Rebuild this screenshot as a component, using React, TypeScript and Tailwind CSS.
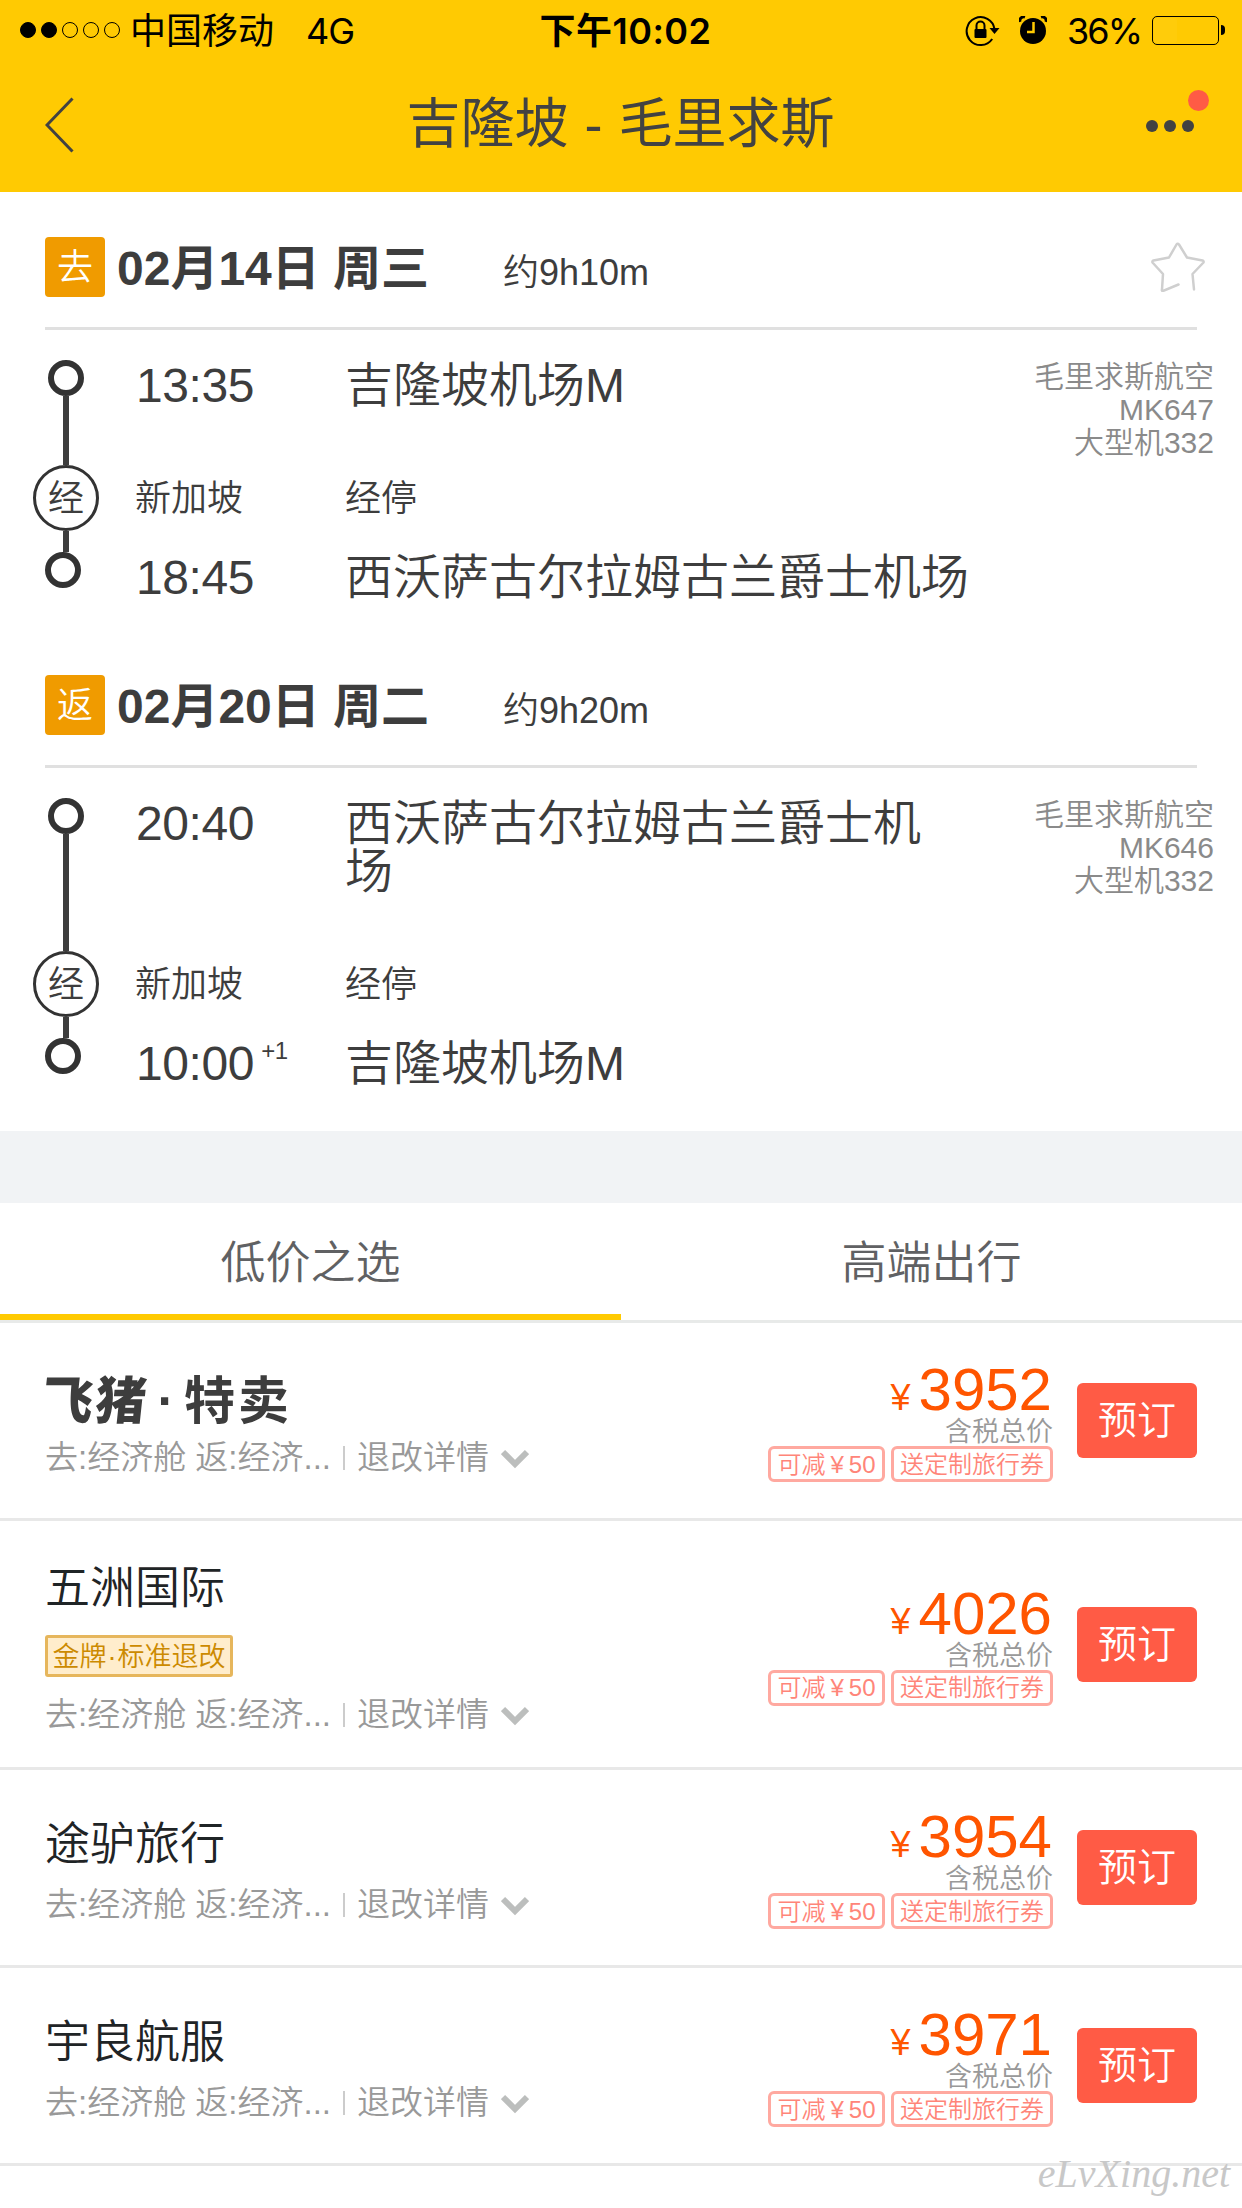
import clsx from 'clsx';

type Leg = {
  tag: string;
  date: string;
  duration: string;
  departTime: string;
  departAirport: string;
  stop: string;
  arriveTime: string;
  arriveAirport: string;
  dayOffset?: string;
  airline: string;
  flightNo: string;
  plane: string;
};

type Offer = {
  name: string;
  price: number;
  badge?: string;
  logo?: boolean;
};

const legs: Leg[] = [
  {
    tag: '去',
    date: '02月14日 周三',
    duration: '约9h10m',
    departTime: '13:35',
    departAirport: '吉隆坡机场M',
    stop: '新加坡',
    arriveTime: '18:45',
    arriveAirport: '西沃萨古尔拉姆古兰爵士机场',
    airline: '毛里求斯航空',
    flightNo: 'MK647',
    plane: '大型机332',
  },
  {
    tag: '返',
    date: '02月20日 周二',
    duration: '约9h20m',
    departTime: '20:40',
    departAirport: '西沃萨古尔拉姆古兰爵士机场',
    stop: '新加坡',
    arriveTime: '10:00',
    arriveAirport: '吉隆坡机场M',
    dayOffset: '+1',
    airline: '毛里求斯航空',
    flightNo: 'MK646',
    plane: '大型机332',
  },
];

const offers: Offer[] = [
  { name: '飞猪·特卖', price: 3952, logo: true },
  { name: '五洲国际', price: 4026, badge: '金牌·标准退改' },
  { name: '途驴旅行', price: 3954 },
  { name: '宇良航服', price: 3971 },
];

function StatusBar() {
  return (
    <div className="flex h-[60px] items-center justify-between pr-[17px] pl-5 font-[Inter,'Noto_Sans_CJK_SC',sans-serif] text-[36px] leading-[60px] font-normal text-black">
      <div className="flex w-[420px] items-center">
        <div className="flex gap-[5px]">
          {[true, true, false, false, false].map((on, i) => (
            <span key={i} className={clsx('size-4 rounded-full border border-black', on && 'bg-black')} />
          ))}
        </div>
        <span className="ml-[10px] pt-0.5">中国移动</span>
        <span className="ml-[32px] pt-0.5 tracking-[-1px]">4G</span>
      </div>
      <div className="flex-1 pt-0.5 pl-1.5 text-center font-semibold tracking-[0.5px] whitespace-nowrap">下午10:02</div>
      <div className="flex w-[420px] items-center justify-end">
        <svg width="36" height="34" viewBox="0 0 36 34" fill="none" className="mr-[18px]">
          <path d="M27.2 26A14 14 0 1 1 29.5 16" stroke="#000" strokeWidth="2" />
          <path d="M24.5 15h10l-5 6z" fill="#000" />
          <path d="M11.5 17v-4.500a4 4 0 0 1 8 0V17" stroke="#000" strokeWidth="2" />
          <rect x="9.500" y="16" width="12" height="9" rx="1" fill="#000" />
        </svg>
        <svg width="28" height="28" viewBox="0 0 28 28" className="mr-[20px]">
          <circle cx="14" cy="15" r="13" fill="#000" />
          <path d="M1 6C0 3 3 0 6 1M27 6c1-3-2-6-5-5" stroke="#000" strokeWidth="3" fill="none" />
          <path d="M14.500 6v10H8" stroke="#ffca02" strokeWidth="2.500" fill="none" />
        </svg>
        <span className="pt-0.5 tracking-[-2px]">36%</span>
        <div className="ml-[11px] h-[29px] w-[67px] rounded-[5px] border border-black p-px">
          <div className="h-full w-[36%] rounded-[3px] bg-[#ffcc0a]" />
        </div>
        <span className="ml-0.5 h-[10px] w-1 rounded-r-full bg-black" />
      </div>
    </div>
  );
}

function Header() {
  return (
    <header className="h-[192px] bg-[#ffca02]">
      <StatusBar />
      <div className="flex h-[132px] items-center justify-between pr-[43px] pl-[45px] text-[#424242]">
        <svg width="57" height="56" viewBox="0 0 57 56" fill="none" stroke="#424242" strokeWidth="3" className="mb-0.5">
          <path d="M27.500 1.500L2 28l25.500 26.500" />
        </svg>
        <h1 className="pb-[5px] text-[54px] leading-[60px] font-normal [word-spacing:1px]">吉隆坡 - 毛里求斯</h1>
        <div className="relative flex w-[60px] justify-end gap-1.5 pr-[5px]">
          <span className="size-3 rounded-full bg-[#424242]" />
          <span className="size-3 rounded-full bg-[#424242]" />
          <span className="size-3 rounded-full bg-[#424242]" />
          <span className="absolute -top-[30px] -right-[10px] size-[21px] rounded-full bg-[#ff5b45]" />
        </div>
      </div>
    </header>
  );
}

function StarIcon() {
  return (
    <svg width="54" height="50" viewBox="0 0 54 50" fill="none" stroke="#cfcfcf" strokeWidth="2.500" strokeLinecap="round" strokeLinejoin="round">
      <path d="M27.500 42.500L12 49Q10.500 49 11 47.500L12 32 1.500 20.500Q1 19 2.500 18.500L18 15.500 25.500 2.500Q26.700 1 28 2.500L36 15.500 51.500 18.500Q53 19 52.500 20.500L41.500 32 43 47.500" />
    </svg>
  );
}

function Timeline() {
  return (
    <div className="flex w-[66px] flex-col items-center">
      <span className="size-9 rounded-full border-[6px] border-[#333]" />
      <span className="w-1.5 flex-1 bg-[#3d3d3d]" />
      <span className="flex size-[66px] items-center justify-center rounded-full border-[3px] border-[#333] pt-px text-[36px] leading-[60px]">
        经
      </span>
      <span className="h-[21px] w-1.5 bg-[#3d3d3d]" />
      <span className="mr-1.5 size-9 rounded-full border-[6px] border-[#333]" />
    </div>
  );
}

function LegDetail({ leg, starred }: { leg: Leg; starred: boolean }) {
  return (
    <section className="text-[#3d3d3d]">
      <div className="mr-[45px] ml-[45px] flex h-[93px] items-start border-b-[3px] border-[#e0e0e0]">
        <span className="flex size-[60px] items-center justify-center rounded-[4px] bg-[#f09b00] pt-0.5 text-[36px] leading-[60px] text-white">
          {leg.tag}
        </span>
        <span className="ml-3 w-[386px] pt-0.5 text-[48px] leading-[60px] font-bold whitespace-nowrap">{leg.date}</span>
        <span className="pt-[6px] text-[36px] leading-[60px]">{leg.duration}</span>
        {starred && (
          <span className="-mr-2 ml-auto pt-[5px]">
            <StarIcon />
          </span>
        )}
      </div>
      <div className="mt-[30px] ml-[33px] flex">
        <Timeline />
        <div className="ml-9 flex-1 text-[48px] leading-[48px]">
          <div className="flex pb-[55px]">
            <span className="w-[210px] pt-0.5 pl-px tracking-[-0.4px]">{leg.departTime}</span>
            <span className="w-[600px] pt-0.5">{leg.departAirport}</span>
            <span className="mr-7 ml-auto h-12 text-right text-[30px] leading-[33px] whitespace-nowrap text-[#8a8a8a]">
              {leg.airline}
              <br />
              {leg.flightNo}
              <br />
              {leg.plane}
            </span>
          </div>
          <div className="flex h-[66px] pt-px text-[36px] leading-[66px]">
            <span className="w-[210px]">{leg.stop}</span>
            <span>经停</span>
          </div>
          <div className="flex h-[57px] pt-[23px] whitespace-nowrap">
            <span className="flex w-[210px] pl-px tracking-[-0.4px]">
              {leg.arriveTime}
              {leg.dayOffset && <span className="-mt-[7px] ml-[7px] text-[24px] leading-[36px]">{leg.dayOffset}</span>}
            </span>
            <span>{leg.arriveAirport}</span>
          </div>
        </div>
      </div>
    </section>
  );
}

function Tabs() {
  return (
    <div className="flex h-[120px] border-b-[3px] border-[#e8eae9] text-center text-[45px] leading-[122px] text-[#606163]">
      <div className="h-[117px] flex-1 border-b-[6px] border-[#ffca02]">低价之选</div>
      <div className="h-[117px] flex-1">高端出行</div>
    </div>
  );
}

function FliggyLogo() {
  return (
    <div className="-ml-[3px] flex h-[54px] items-center text-[51px] leading-[54px] font-bold whitespace-nowrap text-[#3d3d3d]">
      <span className="-skew-x-6 font-black tracking-[2px]">飞猪</span>
      <span className="w-[36px] text-center">·</span>
      <span className="tracking-[3px]">特卖</span>
    </div>
  );
}

function OfferRow({ offer }: { offer: Offer }) {
  return (
    <div
      className={clsx(
        'flex items-center border-b-[3px] border-[#e8e8e8] pr-[45px] pl-[45px]',
        offer.badge ? 'h-[249px]' : 'h-[198px]',
      )}
    >
      <div className={clsx('flex-1 self-start', offer.badge ? 'pt-[40px]' : 'pt-[47px]')}>
        <div className="h-[54px] text-[45px] leading-[56px] text-[#1f2426]">
          {offer.logo ? (
            <div className="pt-[5px]">
              <FliggyLogo />
            </div>
          ) : (
            offer.name
          )}
        </div>
        {offer.badge && (
          <div className="my-5 flex h-[42px] w-[188px] items-center justify-center rounded-[3px] border-[3px] border-[#e6b65c] bg-[#ffedcc] pt-px text-[27px] leading-[36px] whitespace-nowrap text-[#cc8a00]">
            金牌<span className="mx-px">·</span>标准退改
          </div>
        )}
        <div className="mt-4 flex items-center text-[33px] leading-[36px] whitespace-nowrap text-[#999]">
          去:经济舱 返:经济...
          <span className="mr-3 ml-[12px] h-6 w-0.5 bg-[#ccc]" />
          退改详情
          <svg width="28" height="20" viewBox="0 0 28 20" fill="none" stroke="#bcbebd" strokeWidth="6" className="mt-0.5 ml-3">
            <path d="M2 3l12 12L26 3" />
          </svg>
        </div>
      </div>
      <div className="mr-6 flex flex-col items-end">
        <div className="mr-px h-[57px] pt-[5px] text-[60px] leading-[52px] text-[#ff5500]">
          <span className="mr-2 text-[36px]">¥</span>
          {offer.price}
        </div>
        <div className="h-[30px] pt-px text-[27px] leading-[30px] text-[#999]">含税总价</div>
        <div className="flex gap-1.5 text-[24px] leading-[30px] whitespace-nowrap text-[#ff8579]">
          <span className="flex h-9 w-[117px] items-center justify-center rounded-md border-[3px] border-[#ffa9a0] pt-px">
            可减<span className="mx-[5px]">¥</span>50
          </span>
          <span className="flex h-9 w-[162px] items-center justify-center rounded-md border-[3px] border-[#ffa9a0] pt-px">
            送定制旅行券
          </span>
        </div>
      </div>
      <button className="h-[75px] w-[120px] rounded-md bg-[#ff5b45] text-[39px] leading-[75px] text-white">预订</button>
    </div>
  );
}

export default function App() {
  return (
    <div className="relative h-[2208px] w-[1242px] overflow-hidden bg-white font-['Liberation_Sans','Noto_Sans_CJK_SC',sans-serif] font-[350]">
      <Header />
      <main>
        <div className="flex flex-col gap-[87px] pt-[45px] pb-[57px]">
          {legs.map((leg, i) => (
            <LegDetail key={leg.tag} leg={leg} starred={i === 0} />
          ))}
        </div>
        <div className="h-[72px] bg-[#f1f3f5]" />
        <Tabs />
        {offers.map((offer) => (
          <OfferRow key={offer.name} offer={offer} />
        ))}
      </main>
      <div className="absolute right-[12px] bottom-[12px] font-['Liberation_Serif',serif] text-[40px] leading-[44px] text-[#c8c8c8] italic">
        eLvXing.net
      </div>
    </div>
  );
}
